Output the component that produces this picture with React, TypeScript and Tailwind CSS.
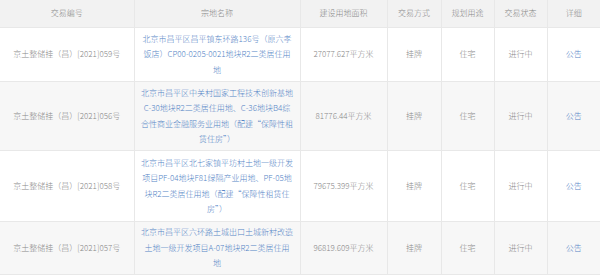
import React from "react";

const rows = [
  {
    code: "京土整储挂（昌）[2021]059号",
    name: ["北京市昌平区昌平镇东环路136号（原六孝", "饭店）CP00-0205-0021地块R2二类居住用", "地"],
    area: "27077.627平方米",
    h: "h-[54px]",
    bg: "bg-white",
  },
  {
    code: "京土整储挂（昌）[2021]056号",
    name: ["北京市昌平区中关村国家工程技术创新基地", "C-30地块R2二类居住用地、C-36地块B4综", "合性商业金融服务业用地（配建“保障性租", "赁住房”）"],
    area: "81776.44平方米",
    h: "h-[69px]",
    bg: "bg-[#f7f7f7]",
  },
  {
    code: "京土整储挂（昌）[2021]058号",
    name: ["北京市昌平区北七家镇平坊村土地一级开发", "项目PF-04地块F81绿隔产业用地、PF-05地", "块R2二类居住用地（配建“保障性租赁住", "房”）"],
    area: "79675.399平方米",
    h: "h-[71px]",
    bg: "bg-white",
  },
  {
    code: "京土整储挂（昌）[2021]057号",
    name: ["北京市昌平区六环路土城出口土城新村改造", "土地一级开发项目A-07地块R2二类居住用", "地"],
    area: "96819.609平方米",
    h: "h-[53px]",
    bg: "bg-[#f7f7f7]",
  },
];

export default function App() {
  const cell = "border border-[#e8e8e8] text-center align-middle p-0";
  return (
    <div
      className="w-[600px] h-[275px] overflow-hidden bg-white text-[8px] leading-[16px] text-[#888] font-light"
      style={{ fontFamily: '"Noto Sans CJK SC", "Noto Sans", sans-serif' }}
    >
      <table className="table-fixed border-collapse w-[600px]">
        <colgroup>
          <col className="w-[134px]" />
          <col className="w-[166px]" />
          <col className="w-[87px]" />
          <col className="w-[54px]" />
          <col className="w-[53px]" />
          <col className="w-[53px]" />
          <col className="w-[53px]" />
        </colgroup>
        <thead>
          <tr className="h-[27px] bg-[#f2f2f2] text-[#888]">
            <th className={`${cell} font-light border-t-0 border-l-0`}>交易编号</th>
            <th className={`${cell} font-light border-t-0`}>宗地名称</th>
            <th className={`${cell} font-light border-t-0`}>建设用地面积</th>
            <th className={`${cell} font-light border-t-0`}>交易方式</th>
            <th className={`${cell} font-light border-t-0`}>规划用途</th>
            <th className={`${cell} font-light border-t-0`}>交易状态</th>
            <th className={`${cell} font-light border-t-0 border-r-0`}>详细</th>
          </tr>
        </thead>
        <tbody>
          {rows.map((r, i) => (
            <tr key={i} className={`${r.h} ${r.bg}`}>
              <td className={`${cell} border-l-0 whitespace-nowrap`}>{r.code}</td>
              <td className={`${cell} text-[#5585c6] whitespace-nowrap leading-[15.5px]`}>
                {r.name.map((l, j) => (
                  <div key={j}>{l}</div>
                ))}
              </td>
              <td className={`${cell} whitespace-nowrap`}>{r.area}</td>
              <td className={cell}>挂牌</td>
              <td className={cell}>住宅</td>
              <td className={cell}>进行中</td>
              <td className={`${cell} border-r-0 text-[#5585c6]`}>公告</td>
            </tr>
          ))}
        </tbody>
      </table>
    </div>
  );
}
